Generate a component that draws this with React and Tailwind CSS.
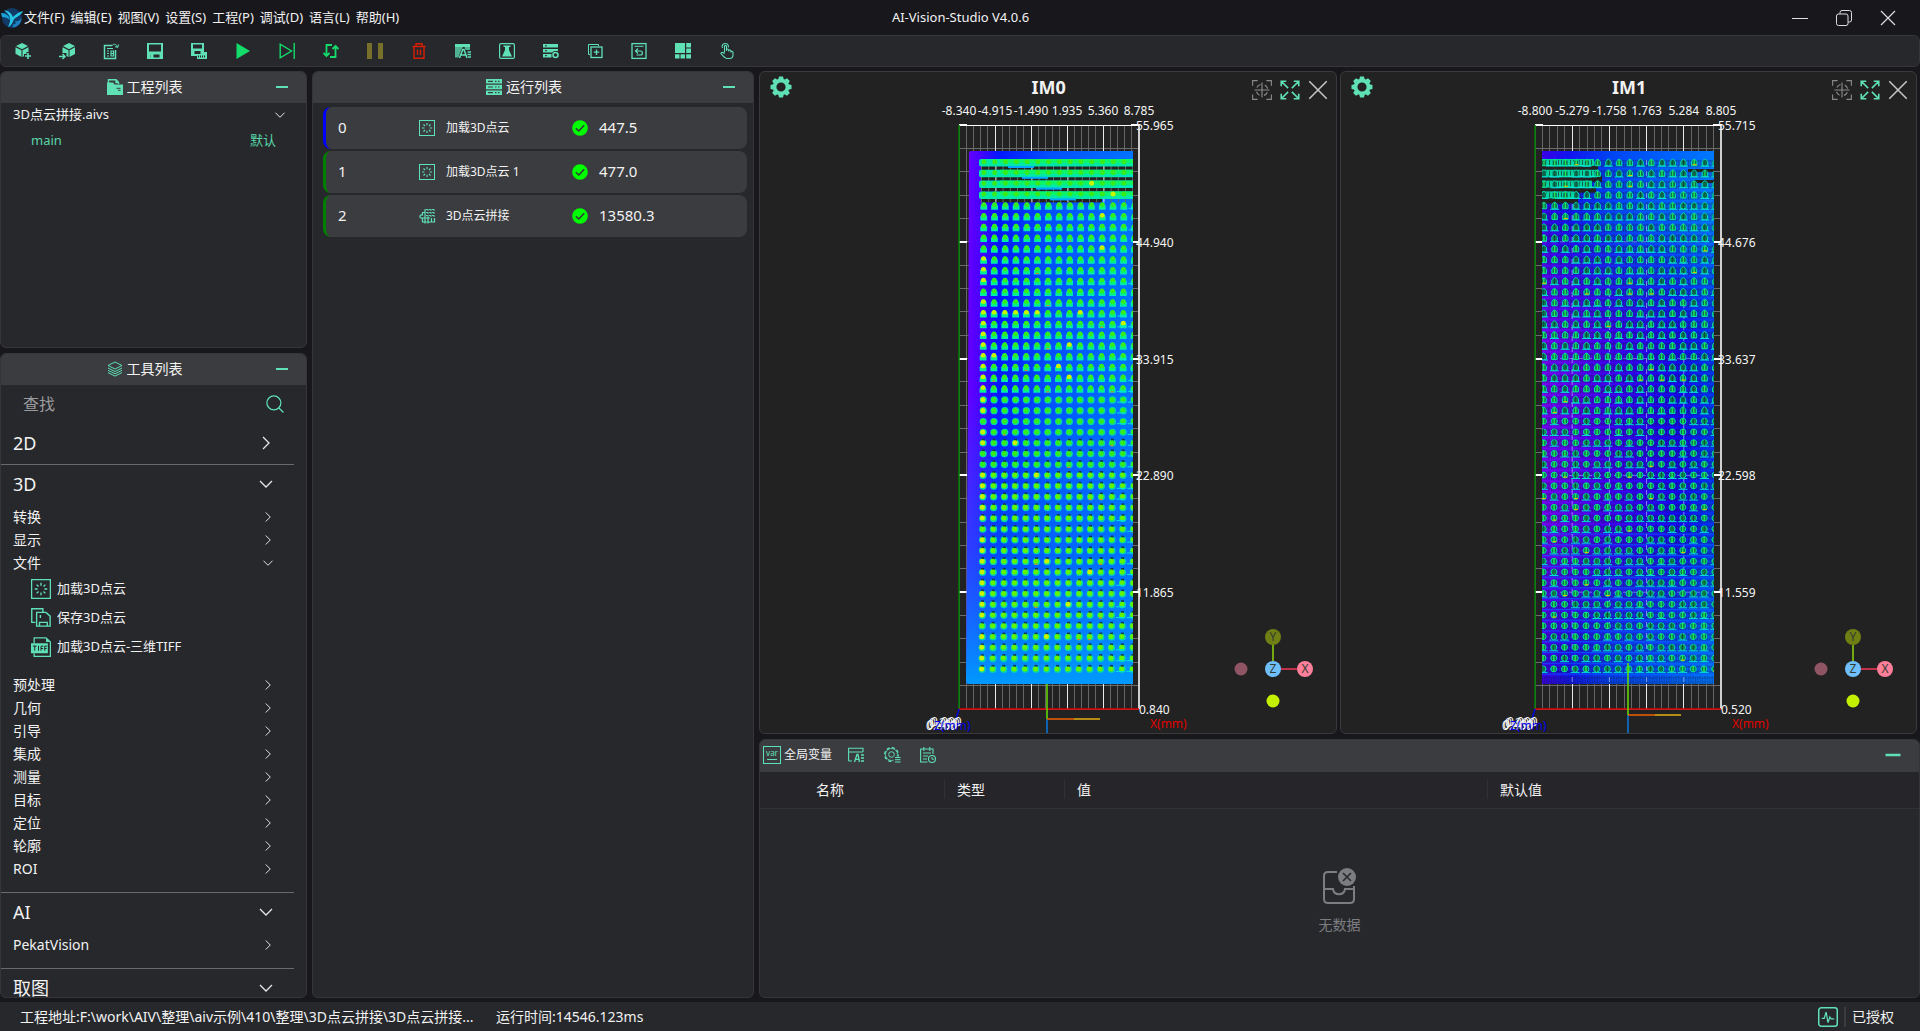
import { useState } from "react";

const menus = [
  "文件(F)",
  "编辑(E)",
  "视图(V)",
  "设置(S)",
  "工程(P)",
  "调试(D)",
  "语言(L)",
  "帮助(H)",
];

const runs = [
  { id: 0, name: "加载3D点云", time: "447.5", icon: "load", edge: "border-l-[#0000ff]" },
  { id: 1, name: "加载3D点云 1", time: "477.0", icon: "load", edge: "border-l-[#008000]" },
  { id: 2, name: "3D点云拼接", time: "13580.3", icon: "stitch", edge: "border-l-[#008000]" },
];

const views = [
  {
    name: "IM0",
    left: 51,
    step: 36,
    xTicks: ["-8.340", "-4.915", "-1.490", "1.935", "5.360", "8.785"],
    yTicks: ["55.965", "44.940", "33.915", "22.890", "11.865", "0.840"],
    originX: 139,
    originY: 616,
    sparse: false,
  },
  {
    name: "IM1",
    left: 47,
    step: 37.2,
    xTicks: ["-8.800", "-5.279", "-1.758", "1.763", "5.284", "8.805"],
    yTicks: ["55.715", "44.676", "33.637", "22.598", "11.559", "0.520"],
    originX: 140,
    originY: 612,
    sparse: true,
  },
];

// 16x16 icons, all drawn with currentColor
const glyphs = {
  cubeAdd: (
    <>
      <path d="M7 0 13 3 7 6.200 1 3Z" fill="currentColor" />
      <path d="M.5 4.200 6.500 7.300V14L.5 10.800Z" fill="currentColor" />
      <path d="M7.500 7.300 13.500 4.200V9H11.500V11H9V13.200L7.500 14Z" fill="currentColor" />
      <path d="M13 10V16M10 13H16" stroke="currentColor" strokeWidth="1.600" />
    </>
  ),
  cubeIn: (
    <>
      <path d="M10 0 16 3 10 6.200 4 3Z" fill="currentColor" />
      <path d="M3.500 4.200 9.500 7.300V14L7.500 13V10H3.500Z" fill="currentColor" />
      <path d="M10.500 7.300 16 4.200V11L10.500 14Z" fill="currentColor" />
      <path d="M0 13.500H6M3.500 11 6 13.500 3.500 16" stroke="currentColor" strokeWidth="1.500" fill="none" />
    </>
  ),
  docOut: (
    <>
      <path d="M9 2.500H1.500V15.500H12.500V7" stroke="currentColor" strokeWidth="1.500" fill="none" />
      <path d="M4 5.500H10M4 8H6M4 10.500H6M4 13H6M8 8H10.500V13H8ZM8 10.500H10.500" stroke="currentColor" strokeWidth="1.200" fill="none" />
      <path d="M9 3C10 .5 13 .5 14.500 4M12 3.500 14.700 4.500 15.500 1.500" stroke="currentColor" fill="none" />
    </>
  ),
  save: (
    <>
      <path d="M0 0H16V16H0Z" fill="currentColor" />
      <path d="M2 1.500H14V8.500H2ZM3.500 11.500H12.500V14.500H3.500Z" fill="#27282c" />
      <path d="M3.500 11H6.500V15H3.500Z" fill="currentColor" />
    </>
  ),
  saveAs: (
    <>
      <path d="M0 0H13V9H16V16H6V13H0Z" fill="currentColor" />
      <path d="M2 1.500H11V5.500H2ZM3.500 8H9.500V11H3.500Z" fill="#27282c" />
      <path d="M7.500 12.500V14.500M9.500 12.500V14.500M11.500 12.500V14.500M13.500 12.500V14.500" stroke="#27282c" />
    </>
  ),
  play: <path d="M1.500 0 15 8 1.500 16Z" fill="currentColor" />,
  step: <path d="M1.200 1.200V14.800L12.500 8ZM15.200 0V16" stroke="currentColor" strokeWidth="1.400" fill="none" />,
  loop: (
    <path
      d="M9 2H3.500V13M.5 10 3.500 13 6.500 10M7 14H12.500V3M9.500 6 12.500 3 15.500 6M6 2H9M7 14H10"
      stroke="currentColor"
      strokeWidth="1.800"
      fill="none"
    />
  ),
  pause: <path d="M0 0H5V16H0ZM11 0H16V16H11Z" fill="currentColor" />,
  trash: (
    <path
      d="M1.500 3.500H14.500M5 3V.8H11V3M3 4V15.200H13V4M6.500 6.500V12M9.500 6.500V12"
      stroke="currentColor"
      strokeWidth="1.400"
      fill="none"
    />
  ),
  windowA: (
    <>
      <path d="M0 1H15V4H0Z" fill="currentColor" />
      <path d="M0 4H8L5.500 8.500 3.500 14.500H0ZM9.500 4H15V7H10.500Z" fill="currentColor" fillOpacity=".75" />
      <path d="M4.500 15 7.800 6.500H9L12 15M5.500 12H10.500M12.500 9H16M12.500 11.500H16M13 14H16" stroke="currentColor" strokeWidth="1.500" fill="none" />
    </>
  ),
  flask: (
    <>
      <rect x=".6" y=".6" width="14.800" height="14.800" rx="1.500" stroke="currentColor" strokeWidth="1.200" fill="none" />
      <path d="M4.500 2.500H11.500V4H10V7L13 13.500H3L6 7V4H4.500Z" fill="currentColor" />
    </>
  ),
  serverGear: (
    <>
      <path d="M0 1H15V4.500H0ZM0 6H15V8H11L9 9.500H0ZM0 11H8.500V14.500H0Z" fill="currentColor" />
      <path d="M2 2.800H4M2 7.700H4M2 12.700H4" stroke="#27282c" />
      <circle cx="12.500" cy="12" r="2.500" stroke="currentColor" strokeWidth="1.600" fill="none" />
    </>
  ),
  copyAdd: (
    <>
      <path d="M3 11.500H1.500V1.500H11.500V3" stroke="currentColor" fill="none" />
      <rect x="4" y="4" width="11" height="10.500" stroke="currentColor" strokeWidth="1.300" fill="none" />
      <path d="M9.500 6.500V12M6.800 9.200H12.200" stroke="currentColor" strokeWidth="1.300" />
    </>
  ),
  undo: (
    <>
      <rect x="1" y=".6" width="14" height="14.800" stroke="currentColor" strokeWidth="1.300" fill="none" />
      <path d="M3.500 3.300H12.500" stroke="currentColor" />
      <path d="M7 5.500 4.500 8 7 10.500M5 8H9.500C12 8 12 12 9.500 12H5.500" stroke="currentColor" strokeWidth="1.200" fill="none" />
    </>
  ),
  layout: (
    <path
      d="M0 0H10V10H0ZM11.200 0H16V4.500H11.200ZM11.200 5.500H16V10H11.200ZM0 11.200H4.500V15.500H0ZM5.500 11.200H10V15.500H5.500ZM11.200 11.200H16V15.500H11.200Z"
      fill="currentColor"
    />
  ),
  tap: (
    <path
      d="M5.500 9.500V3.500C5.500 2 7.500 2 7.500 3.500V8M7.500 7C7.500 5.600 9.700 5.600 9.700 7V8.500C9.700 6.500 11.900 6.500 11.900 8V9.500C11.900 7.800 14 7.800 14 9.500V12C14 14.500 12.500 15.500 10.500 15.500H8C6 15.500 5 14 1.800 10.500 2.500 8.800 4 9 5.500 10.800M3.500 5C2 1.500 5 .3 6.500 .5 8.500 .5 10 2.500 9.200 4.500"
      stroke="currentColor"
      strokeWidth="1.100"
      fill="none"
    />
  ),
  folder: (
    <>
      <path d="M1.500 4V.8H9L11.500 3.200V5M9 .8V3.500H11.500" stroke="currentColor" strokeWidth="1.400" fill="none" />
      <path d="M0 3.500H6L7.500 5.500H16V16H0Z" fill="currentColor" />
      <path d="M9.500 9.300H13.500M11 11.300H13.500" stroke="#3b3c3f" />
    </>
  ),
  servers: (
    <>
      <path d="M0 0H16V4.600H0ZM0 5.700H16V10.300H0ZM0 11.400H16V16H0Z" fill="currentColor" />
      <path d="M2 2.300H7M2 8H7M2 13.700H7M9 2.300H10.500M12 2.300H13.500M9 8H10.500M12 8H13.500M9 13.700H10.500M12 13.700H13.500" stroke="#3b3c3f" strokeWidth="1.200" />
    </>
  ),
  layers: (
    <path
      d="M8 1 15 4.500 8 8 1 4.500ZM1 7 8 10.500 15 7M1 9.300 8 12.800 15 9.300M1 11.600 8 15.100 15 11.600"
      stroke="currentColor"
      fill="none"
    />
  ),
  load: (
    <>
      <rect x=".5" y=".5" width="15" height="15" stroke="currentColor" fill="none" />
      <path
        d="M8 3V5.300M8 10.700V13M3 8H5.300M10.700 8H13M4.500 4.500 6 6M10 10 11.500 11.500M4.500 11.500 6 10M10 6 11.500 4.500"
        stroke="currentColor"
        strokeWidth="1.100"
      />
    </>
  ),
  stitch: (
    <>
      <path d="M6 1V4.500H3.500V7C0 6 0 11 3.500 10V14H15.500V10M6 4.500V15.500M9 9V15.500M12.500 10V14M3.500 10H11" stroke="currentColor" strokeWidth="1.200" fill="none" />
      <path d="M9 1V9M12 1V9M15 1V9M7 1.500H16M7 4.500H16M7 7.500H16" stroke="currentColor" strokeWidth=".9" strokeDasharray="2 1" />
    </>
  ),
  saveCloud: (
    <>
      <path d="M3.500 11.500H.6V.6H9.500V3.500" stroke="currentColor" strokeWidth="1.100" fill="none" />
      <path d="M4.500 3.500H12L15.300 6.500V14.500H4.500ZM6.800 14.500V11.500H13V14.500M7.500 5.500V8" stroke="currentColor" strokeWidth="1.100" fill="none" />
    </>
  ),
  tiff: (
    <>
      <path d="M2.500 5V.6H12L15.500 4V15.400H2.500V13" stroke="currentColor" fill="none" />
      <path d="M0 5H13.500V13H0ZM12 .5 15.500 4H12Z" fill="currentColor" />
      <path d="M1.500 7.300H4.500M3 7V11M6 7V11M8 11V7.300H10M8 9.200H9.700M11 11V7.300H13M11 9.200H12.500" stroke="#27282c" strokeWidth=".8" fill="none" />
    </>
  ),
  tableA: (
    <>
      <path d="M.6 14V1.200H15V5M.6 5H15M.6 14H4" stroke="currentColor" strokeWidth="1.100" fill="none" />
      <path d="M6.500 15 9 7.500H10L11.500 15M7.500 12.300H11M13 8H16M13 11H16M13 14H16" stroke="currentColor" strokeWidth="1.300" fill="none" />
    </>
  ),
  gearList: (
    <>
      <circle cx="7.500" cy="7.500" r="6.800" stroke="currentColor" strokeWidth="1.400" strokeDasharray="3.200 2.140" fill="none" />
      <circle cx="7.500" cy="7.500" r="6" stroke="currentColor" strokeWidth=".8" fill="none" />
      <circle cx="7.500" cy="7.500" r="2.800" stroke="currentColor" fill="none" />
      <path d="M9.500 9.500H17V17H9.500Z" fill="#3b3c3f" />
      <path d="M11 10.500H16.500M11 12.700H16.500M11 15H16.500" stroke="currentColor" />
    </>
  ),
  calendar: (
    <>
      <path d="M7.500 15H.6V2H13V7M3.800 0V4M9.800 0V4M3 6H11M3 9H8M3 12H7" stroke="currentColor" strokeWidth="1.100" fill="none" />
      <circle cx="12" cy="12" r="3.500" stroke="currentColor" strokeWidth="1.100" fill="none" />
      <path d="M12 10V12.200H14" stroke="currentColor" fill="none" />
    </>
  ),
  focus: (
    <>
      <path d="M.5 4.500V.5H4.500M11.500 .5H15.500V4.500M15.500 11.500V15.500H11.500M4.500 15.500H.5V11.500" stroke="currentColor" strokeWidth=".9" fill="none" />
      <path d="M8 2V14M2 8H14" stroke="currentColor" strokeWidth=".9" />
      <circle cx="8" cy="8" r="4.600" stroke="currentColor" strokeWidth=".9" strokeDasharray="3.600 3.620" strokeDashoffset="-1.800" fill="none" />
    </>
  ),
  expand: (
    <path
      d="M1 5V1H5M1 1 6.500 6.500M11 1H15V5M15 1 9.500 6.500M1 11V15H5M1 15 6.500 9.500M15 11V15H11M15 15 9.500 9.500"
      stroke="currentColor"
      strokeWidth="1.300"
      fill="none"
    />
  ),
  close: <path d="M1 1 15 15M15 1 1 15" stroke="currentColor" strokeWidth="1.200" />,
  search: (
    <>
      <circle cx="7" cy="7" r="6.200" stroke="currentColor" strokeWidth="1.100" fill="none" />
      <path d="M11.500 11.500 15.500 15.500" stroke="currentColor" strokeWidth="1.100" />
    </>
  ),
  minus: <path d="M2 8H14" stroke="currentColor" strokeWidth="2" />,
  right: <path d="M5 2 11 8 5 14" stroke="currentColor" strokeWidth="1.300" fill="none" />,
  down: <path d="M2 5 8 11 14 5" stroke="currentColor" strokeWidth="1.300" fill="none" />,
  pulse: (
    <>
      <rect x=".6" y=".6" width="14.800" height="14.800" rx="2" stroke="currentColor" strokeWidth="1.200" fill="none" />
      <path d="M3 9H5L6.500 4 8 12.500 9.500 8 10.500 9.500H13" stroke="currentColor" fill="none" />
    </>
  ),
};

const Icon = ({ name, className = "size-4" }) => (
  <svg viewBox="0 0 16 16" className={`shrink-0 overflow-visible ${className}`} aria-hidden="true">
    {glyphs[name]}
  </svg>
);

const tools = [
  ["cubeAdd", "text-[#5fe0b5]"],
  ["cubeIn", "text-[#5fe0b5]"],
  ["docOut", "text-[#5fe0b5]"],
  ["save", "text-[#5fe0b5]"],
  ["saveAs", "text-[#5fe0b5]"],
  ["play", "text-[#13dc6b]"],
  ["step", "text-[#13dc6b]"],
  ["loop", "text-[#13dc6b]"],
  ["pause", "text-[#77702a]"],
  ["trash", "text-[#d81e06]"],
  ["windowA", "text-[#5fe0b5]"],
  ["flask", "text-[#5fe0b5]"],
  ["serverGear", "text-[#5fe0b5]"],
  ["copyAdd", "text-[#5fe0b5]"],
  ["undo", "text-[#5fe0b5]"],
  ["layout", "text-[#5fe0b5]"],
  ["tap", "text-[#5fe0b5]"],
];

const Logo = () => (
  <svg viewBox="0 0 22 22" className="size-[22px] shrink-0" aria-hidden="true">
    <circle cx="11" cy="11" r="10" fill="#123a66" />
    <path d="M0 6C4 6 8 8 9 13 7 11 4 10 1 10Z" fill="#1aa3d6" />
    <path d="M3 3C8 4 10 6 12 10 15 7 18 5 22 4 20 9 14 10 12.500 13 11.500 16 10 19 7 20 9 16 9.500 13 9 11 8 7 5 5 3 3Z" fill="#26c6e6" />
    <path d="M14 14C17 15 19 13 20.500 11 20.500 16 17 20 12 20.500 11 18.500 12 17 15 16.500Z" fill="#1b7fc0" />
  </svg>
);

const PanelHeader = ({ icon, title }) => (
  <header className="relative flex h-[31px] shrink-0 items-center justify-center gap-1 bg-[#3b3c3f] pr-[18px] pb-0.5 text-sm">
    <span className="text-[#5fe0b5]">
      <Icon name={icon} />
    </span>
    <h2>{title}</h2>
    <button aria-label="minimize" className="absolute right-4 text-[#5fe0b5]">
      <Icon name="minus" />
    </button>
  </header>
);

const GroupRow = ({ label, open }) => (
  <button className="flex h-[23px] w-full items-center justify-between pr-8 pl-3 text-sm">
    {label}
    <Icon name={open ? "down" : "right"} className="size-3 text-gray-200" />
  </button>
);

const Category = ({ label, open, children }) => (
  <section className="mr-3 shrink-0 border-b border-[#6a6a6a]">
    <button className="flex h-10 w-full items-center justify-between pr-5 pb-0.5 pl-3 text-lg">
      {label}
      <Icon name={open ? "down" : "right"} className="size-4 text-gray-200" />
    </button>
    {children && <div className="-mr-3 pb-3">{children}</div>}
  </section>
);

const ToolItem = ({ icon, label }) => (
  <li>
    <button className="flex h-[29px] items-center gap-1.5 pl-[30px] text-[13px]">
      <Icon name={icon} className="size-5 text-[#5fe0b5]" />
      {label}
    </button>
  </li>
);

// cheap repeatable noise in 0..1
const noise = (a, b) => {
  const v = Math.sin(a * 12.9898 + b * 78.233) * 43758.5453;
  return v - Math.floor(v);
};

const range = (n) => Array.from({ length: n }, (_, i) => i);

const TOP = 22;
const BOTTOM = 606;

const GridLines = ({ left, step }) => (
  <g shapeRendering="crispEdges">
    {range(25).map((i) => (
      <path key={i} d={`M${left + (i * step) / 5} ${TOP}V${BOTTOM}`} stroke="#666" />
    ))}
    {range(26).map((i) => (
      <path key={i} d={`M${left} ${TOP + i * 23.36}H${left + step * 5}`} stroke="#6b6b6b" />
    ))}
    {range(5).map((i) => (
      <path key={i} d={`M${left + (i + 1) * step} ${TOP}V${BOTTOM}`} stroke="#e8e8e8" />
    ))}
    <path d={`M${left + step * 5} ${TOP}V${BOTTOM}`} stroke="#d0d0d0" strokeWidth="2" />
    {range(5).map((i) => (
      <path
        key={i}
        d={`M${left} ${TOP + i * 116.8}h8M${left + step * 5 - 8} ${TOP + i * 116.8}h8`}
        stroke="#fff"
        strokeWidth="2"
      />
    ))}
    <path d={`M${left} ${TOP}H${left + step * 5}`} stroke="#fff" />
  </g>
);

const DenseCloud = () => (
  <g clipPath="url(#denseClip)">
    <defs>
      <clipPath id="denseClip">
        <path d="M63 48H225V581H60Q58 581 58 578L60 300 61 50Q61 48 63 48Z" />
      </clipPath>
      <linearGradient id="denseX">
        <stop offset="0" stopColor="#6a00ff" />
        <stop offset=".08" stopColor="#4a00ff" />
        <stop offset=".2" stopColor="#0018ff" />
        <stop offset=".5" stopColor="#0050ff" />
        <stop offset="1" stopColor="#0074ff" />
      </linearGradient>
      <linearGradient id="denseY" x2="0" y2="1">
        <stop offset=".45" stopColor="#0080ff" stopOpacity="0" />
        <stop offset=".75" stopColor="#0070ff" stopOpacity=".55" />
        <stop offset="1" stopColor="#009aff" />
      </linearGradient>
    </defs>
    <rect x="58" y="48" width="168" height="534" fill="url(#denseX)" />
    <rect x="58" y="48" width="168" height="534" fill="url(#denseY)" />
    {range(4).map((r) => {
      const y = 56 + r * 10.8;
      return (
        <g key={r}>
          <rect x="74" y={y + 7} width={r === 3 ? 120 : 152} height="4" fill="#222" />
          {range(22).map((i) => (
            <rect key={i} x={73 + i * 7.2} y={y + 7} width="1" height="4" fill={i % 5 === 2 ? "#eee" : "#666"} />
          ))}
          <rect x="71" y={y} width="155" height="7.500" rx="2" fill="#00e8a8" />
          <rect x="92" y={y} width="134" height="4" fill="#0cf468" />
          <rect x={100 + r * 14} y={y + 7} width="26" height="2" fill="#00a8ff" />
        </g>
      );
    })}
    {range(48).map((r) =>
      range(15).map((c) => {
        const t = r / 47;
        const x = 76 - t * 2.3 + c * 10.77;
        const y = 59.7 + r * 10.77;
        const n = noise(r, c);
        const bright = (c === 0 && r > 8 && n > 0.25) || n > 0.98 || (r === 14 && c < 6);
        const green = t > 0.6 ? "#62f400" : "#35ec1c";
        return (
          <g key={`${r}-${c}`}>
            {r > 3 && t < 0.45 && (
              <path d={`M${x - 3.4} ${y + 4}V${y}Q${x} ${y - 7} ${x + 3.4} ${y}V${y + 4}Z`} fill="#00e4c0" />
            )}
            {t >= 0.45 && <circle cx={x + 0.4} cy={y + 0.3} r="3.600" fill="#00d8a8" />}
            {t > 0.55 && <rect x={x - 1} y={y - 4} width="3" height="2" fill="#0c3a55" />}
            <circle cx={x} cy={y - (t < 0.45 ? 1 : 0)} r="2.500" fill={bright ? "#c8f400" : green} />
            {r > 3 && t < 0.45 && <rect x={x - 2.5} y={y + 1} width="5" height="2" fill="#00f47c" />}
            {n > 0.86 && t < 0.95 && n < 0.9 && <rect x={x - 1.5} y={y + 2.5} width="3" height="1" fill="#e87820" />}
            {c > 12 && n > 0.5 && <rect x={x - 6} y={y + 2} width="9" height="1" fill="#00e0e0" />}
          </g>
        );
      })
    )}
  </g>
);

const SparseCloud = () => (
  <g clipPath="url(#sparseClip)">
    <defs>
      <clipPath id="sparseClip">
        <rect x="54" y="48" width="172" height="533" />
      </clipPath>
      <linearGradient id="sparseX">
        <stop offset="0" stopColor="#3a00e8" />
        <stop offset=".15" stopColor="#1212f0" />
        <stop offset=".4" stopColor="#0044f4" />
        <stop offset="1" stopColor="#0078ff" />
      </linearGradient>
      <linearGradient id="purpleX">
        <stop offset="0" stopColor="#7400f0" />
        <stop offset=".35" stopColor="#4200ee" />
        <stop offset=".8" stopColor="#1408f0" />
        <stop offset="1" stopColor="#0038f0" />
      </linearGradient>
      <linearGradient id="fadeY" x2="0" y2="1">
        <stop offset=".12" stopColor="#fff" stopOpacity="0" />
        <stop offset=".35" stopColor="#fff" />
        <stop offset=".7" stopColor="#fff" />
        <stop offset="1" stopColor="#fff" stopOpacity="0" />
      </linearGradient>
      <mask id="purpleMask">
        <rect x="54" y="48" width="172" height="533" fill="url(#fadeY)" />
      </mask>
      <pattern id="weave" width="7.200" height="10.770" patternUnits="userSpaceOnUse">
        <path d="M1 2V11M3.500 2V11M6 3V11" stroke="#101828" strokeWidth="1" strokeOpacity=".4" />
        <path d="M0 4H7.200M0 8.500H7.200" stroke="#101828" strokeWidth="1" strokeOpacity=".25" />
      </pattern>
    </defs>
    <rect x="54" y="48" width="172" height="533" fill="url(#sparseX)" />
    <rect x="54" y="48" width="172" height="533" fill="url(#purpleX)" mask="url(#purpleMask)" />
    <rect x="54" y="57" width="172" height="524" fill="url(#weave)" />
    {range(14).map((i) => (
      <path key={i} d={`M54 ${431 + i * 10.77}H226`} stroke="#0068ff" strokeOpacity=".7" />
    ))}
    <path d="M84.200 90V581M121.400 57V581M158.600 57V581M195.800 57V581" stroke="#c8d8ff" strokeOpacity=".6" strokeDasharray="5 6" />
    <path d="M54 138.800H226M54 255.600H226M54 372.400H226M54 489.200H226" stroke="#b8c8ff" strokeOpacity=".5" strokeDasharray="5 4" />
    {range(4).map((r) => {
      const w = [52, 56, 50, 32][r];
      const y = 56 + r * 10.8;
      return (
        <g key={r}>
          <rect x="54" y={y + 6} width={w + 4} height="6" fill="#222" />
          <rect x="54" y={y} width={w} height="7" fill="#00d29c" />
          {range(Math.floor(w / 3)).map((i) => (
            <rect key={i} x={55 + i * 3} y={y + 1} width="1" height="5" fill="#1a6050" />
          ))}
          <rect x={58 + r * 3} y={y + 6} width={w - 8} height="1.500" fill="#00f0d0" />
        </g>
      );
    })}
    <rect x="200" y="66" width="26" height="3" fill="#222" />
    <rect x="206" y="77" width="20" height="3" fill="#222" />
    {range(48).map((r) =>
      range(17).map((c) => {
        const t = r / 47;
        const x = 56 - t + c * 10.73;
        const y = 59.7 + r * 10.77;
        const n = noise(r + 3, c + 9);
        return (
          <g key={`${r}-${c}`}>
            {t < 0.5 ? (
              <path
                d={`M${x - 2.7} ${y + 3}V${y - 1}Q${x} ${y - 6} ${x + 2.7} ${y - 1}V${y + 3}Z`}
                fill={n > 0.6 ? "#10a860" : "#108a5c"}
                stroke="#00dcb4"
                strokeWidth="1"
              />
            ) : (
              <circle cx={x} cy={y} r="3" fill="#14b450" stroke="#00d4b0" strokeWidth="1" />
            )}
            <rect x={x - 1.8} y={y - 2} width="1" height="4" fill="#0a6a50" />
            <rect x={x - 0.5} y={y - 3} width="1" height="6" fill={n > 0.4 ? "#20f050" : "#0a4838"} />
            <rect x={x + 1} y={y - 2} width="1" height="4" fill="#0a6a50" />
            {n < 0.5 && <rect x={x - 4.5} y={y + 3} width="9" height="1" fill="#00dcdc" />}
            {n > 0.95 && <rect x={x - 1.5} y={y + 1.5} width="4" height="1" fill="#e8c000" />}
          </g>
        );
      })
    )}
  </g>
);

const Plot = ({ view }) => {
  const { left, step, originX, originY } = view;
  const right = left + step * 5;

  return (
    <svg viewBox="0 0 280 630" className="h-[630px] w-[280px] shrink-0 overflow-visible text-xs" fill="#f5f5f5">
      <GridLines left={left} step={step} />
      {view.sparse ? <SparseCloud /> : <DenseCloud />}
      {view.xTicks.map((tick, i) => (
        <text key={tick} x={left + i * step} y="12" textAnchor="middle">
          {tick}
        </text>
      ))}
      {view.yTicks.map((tick, i) => (
        <text key={tick} x={right - (i === 5 ? 0 : 3)} y={27 + i * 116.8}>
          {tick}
        </text>
      ))}
      <g fill="none">
        <path d={`M${left} ${TOP}V${BOTTOM}`} stroke="#007c00" strokeWidth="1.500" />
        <path d={`M${left} ${BOTTOM}H${right}`} stroke="#e00000" strokeWidth="1.500" />
        <path d={`M${left} ${BOTTOM}L${left - 4} 620`} stroke="#0000e0" strokeWidth="1.500" />
        <path d={`M${originX} ${view.sparse ? 560 : 581}V${originY}`} stroke="#66e000" strokeWidth="1.500" />
        <path d={`M${originX} ${originY}V630`} stroke="#0878e0" strokeWidth="1.500" />
        <path d={`M${originX} ${originY}H${originX + 27}`} stroke="#f06000" strokeWidth="1.500" />
        <path d={`M${originX + 27} ${originY}H${originX + 53}`} stroke="#e8b010" strokeWidth="1.500" />
      </g>
      <text x={left - 28} y="623">0.000</text>
      <text x={left - 30} y="624">0.200</text>
      <text x={left - 32} y="626">0.400</text>
      <text x={left - 33} y="627">0.600</text>
      <text x={left - 25} y="627" fill="#0000e8">
        Z(mm)
      </text>
      <text x={right + 11} y="625" fill="#e00000">
        X(mm)
      </text>
    </svg>
  );
};

const AxisGizmo = () => (
  <svg viewBox="0 0 84 84" className="absolute right-[21px] bottom-[22px] size-[84px] text-xs" textAnchor="middle" fill="#333a33">
    <path d="M42 34V18" stroke="#76a810" strokeWidth="2" />
    <path d="M42 42H66" stroke="#c03048" strokeWidth="2" />
    <circle cx="42" cy="10" r="8" fill="#6f7f14" />
    <circle cx="10" cy="42" r="6.500" fill="#905565" />
    <circle cx="42" cy="42" r="8" fill="#6fbfff" />
    <circle cx="74" cy="42" r="8" fill="#ff7f9a" />
    <circle cx="42" cy="74" r="6.500" fill="#c3f000" />
    <text x="42" y="14">Y</text>
    <text x="42" y="46">Z</text>
    <text x="74" y="46">X</text>
  </svg>
);

const GearIcon = () => (
  <svg viewBox="0 0 22 22" className="size-[22px] text-[#5fe0b5]" fill="currentColor" aria-hidden="true">
    {range(8).map((i) => (
      <path key={i} d="M8 4.500 9 .5H13L14 4.500Z" transform={`rotate(${i * 45} 11 11)`} />
    ))}
    <circle cx="11" cy="11" r="6.400" fill="none" stroke="currentColor" strokeWidth="3.600" />
  </svg>
);

const ViewPanel = ({ view }) => (
  <section className="relative flex min-w-0 flex-1 flex-col overflow-hidden rounded-md border border-[#3a3a3c] bg-[#222222]">
    <header className="flex h-[31px] shrink-0 items-center justify-between pr-2 pb-0.5 pl-2.5">
      <button aria-label="settings">
        <GearIcon />
      </button>
      <h2 className="pl-[54px] text-lg font-bold">{view.name}</h2>
      <div className="flex items-center gap-2 pt-1.5 text-[#c8c8c8]">
        <button aria-label="focus" className="text-[#8a8a8a]">
          <Icon name="focus" className="size-5" />
        </button>
        <button aria-label="expand" className="text-[#5fe0b5]">
          <Icon name="expand" className="size-5" />
        </button>
        <button aria-label="close">
          <Icon name="close" className="size-5" />
        </button>
      </div>
    </header>
    <div className="flex min-h-0 flex-1 justify-center">
      <Plot view={view} />
    </div>
    <AxisGizmo />
  </section>
);

const VariablePanel = () => (
  <section className="flex min-h-0 flex-1 flex-col overflow-hidden rounded-md border border-[#35363a] bg-[#27282c]">
    <header className="flex h-8 shrink-0 items-center bg-[#3b3c3f] pb-0.5 pl-[3px] text-xs">
      <span className="flex size-[18px] flex-col items-center border border-[#5fe0b5] text-[8px] leading-3 text-[#5fe0b5]">
        var
        <span className="h-px w-2.5 bg-[#5fe0b5]" />
      </span>
      <h2 className="pl-[3px]">全局变量</h2>
      <div className="flex gap-5 pl-4 text-[#5fe0b5]">
        <button aria-label="rename">
          <Icon name="tableA" />
        </button>
        <button aria-label="options">
          <Icon name="gearList" />
        </button>
        <button aria-label="schedule">
          <Icon name="calendar" />
        </button>
      </div>
      <button aria-label="minimize" className="ml-auto pr-4 text-[#5fe0b5]">
        <Icon name="minus" className="size-5" />
      </button>
    </header>
    <table className="w-full table-fixed text-left text-sm">
      <thead>
        <tr className="h-9 border-b border-[#303136] bg-[#26252a]">
          <th className="w-[184px] pl-14 font-normal">名称</th>
          <th className="w-[120px] font-normal">
            <span className="border-l border-[#303136] pl-3">类型</span>
          </th>
          <th className="w-[36.5%] font-normal">
            <span className="border-l border-[#303136] pl-3">值</span>
          </th>
          <th className="font-normal">
            <span className="border-l border-[#303136] pl-3">默认值</span>
          </th>
        </tr>
      </thead>
    </table>
    <div className="flex flex-1 flex-col items-center justify-center gap-2.5 pb-1 text-sm text-[#7c7d80]">
      <svg viewBox="0 0 36 38" className="h-[38px] w-9" fill="none" aria-hidden="true">
        <path d="M15 5H6Q2 5 2 9V32Q2 36 6 36H28Q32 36 32 32V19M2 22H11C12 29 22 29 23 22H32" stroke="#7c7d80" strokeWidth="2" />
        <circle cx="25" cy="10" r="9" fill="#7c7d80" />
        <path d="M21 6 29 14M29 6 21 14" stroke="#27282c" strokeWidth="1.600" />
      </svg>
      无数据
    </div>
  </section>
);

export default function App() {
  const [query, setQuery] = useState("");

  return (
    <div className="flex h-screen flex-col bg-[#18171c] font-['Noto_Sans','Noto_Sans_CJK_SC',sans-serif] text-[#f2f2f2]">
      <header className="flex h-[35px] shrink-0 items-center">
        <div className="flex flex-1 items-center pl-px">
          <Logo />
          <nav className="flex gap-1.5 pl-px text-[13px]">
            {menus.map((item) => (
              <button key={item} className="whitespace-nowrap">
                {item}
              </button>
            ))}
          </nav>
        </div>
        <h1 className="text-[13px]">AI-Vision-Studio V4.0.6</h1>
        <div className="flex flex-1 justify-end">
          <div className="flex items-center gap-7 pr-6">
            <button aria-label="minimize window">
              <svg viewBox="0 0 16 16" className="size-4">
                <path d="M0 8.500H16" stroke="#ddd" />
              </svg>
            </button>
            <button aria-label="restore window">
              <svg viewBox="0 0 16 16" className="size-4" fill="none" stroke="#ddd">
                <rect x=".5" y="4" width="11.500" height="11.500" rx="2" />
                <path d="M4 4V2.500Q4 .5 6 .5H13.500Q15.500 .5 15.500 2.500V10Q15.500 12 13.500 12H12" />
              </svg>
            </button>
            <button aria-label="close window">
              <Icon name="close" className="size-4 text-[#ddd]" />
            </button>
          </div>
        </div>
      </header>

      <div className="flex h-8 shrink-0 items-center gap-7 rounded-md border border-[#35363a] bg-[#27282c] px-3.5">
        {tools.map(([name, color]) => (
          <button key={name} aria-label={name} className={color}>
            <Icon name={name} />
          </button>
        ))}
      </div>

      <main className="flex min-h-0 flex-1 gap-[5px] py-1">
        <div className="flex w-[307px] shrink-0 flex-col gap-[5px]">
          <section className="h-[277px] shrink-0 overflow-hidden rounded-md border border-[#35363a] bg-[#27282c]">
            <PanelHeader icon="folder" title="工程列表" />
            <button className="flex h-6 w-full items-center justify-between pr-5 pl-3 text-[13px]">
              3D点云拼接.aivs
              <Icon name="down" className="size-3" />
            </button>
            <div className="flex h-7 items-center justify-between pr-[30px] pl-[30px] text-[13px] text-[#58d6a8]">
              <span>main</span>
              <span>默认</span>
            </div>
          </section>

          <section className="flex min-h-0 flex-1 flex-col overflow-hidden rounded-md border border-[#35363a] bg-[#27282c]">
            <PanelHeader icon="layers" title="工具列表" />
            <label className="flex h-[39px] shrink-0 items-center pr-[22px] pb-0.5 pl-[22px] text-[#5fe0b5]">
              <input
                value={query}
                onChange={(e) => setQuery(e.target.value)}
                placeholder="查找"
                aria-label="查找"
                className="min-w-0 flex-1 bg-transparent text-base text-white outline-none placeholder:text-[#9a9b9e]"
              />
              <Icon name="search" className="size-[18px]" />
            </label>
            <Category label="2D" />
            <Category label="3D" open>
              <GroupRow label="转换" />
              <GroupRow label="显示" />
              <GroupRow label="文件" open />
              <ul className="pb-3">
                <ToolItem icon="load" label="加载3D点云" />
                <ToolItem icon="saveCloud" label="保存3D点云" />
                <ToolItem icon="tiff" label="加载3D点云-三维TIFF" />
              </ul>
              {["预处理", "几何", "引导", "集成", "测量", "目标", "定位", "轮廓", "ROI"].map((label) => (
                <GroupRow key={label} label={label} />
              ))}
            </Category>
            <Category label="AI" open>
              <GroupRow label="PekatVision" />
            </Category>
            <Category label="取图" open />
          </section>
        </div>

        <section className="w-[442px] shrink-0 overflow-hidden rounded-md border border-[#35363a] bg-[#27282c]">
          <PanelHeader icon="servers" title="运行列表" />
          <ul className="flex flex-col gap-0.5 py-1 pr-1.5 pl-2.5">
            {runs.map((run) => (
              <li
                key={run.id}
                className={`flex h-[42px] items-center rounded-lg border-l-[3px] bg-[#3b3c3f] pl-3 ${run.edge}`}
              >
                <span className="w-[81px] pb-0.5 text-[15px]">{run.id}</span>
                <Icon name={run.icon} className="size-4 text-[#5fe0b5]" />
                <span className="w-[137px] pl-[11px] text-xs">{run.name}</span>
                <svg viewBox="0 0 16 16" className="size-4" aria-hidden="true">
                  <circle cx="8" cy="8" r="7.800" fill="#00ff00" />
                  <path d="M3.800 8.200 6.800 11 12.200 5.200" stroke="#33343a" strokeWidth="1.500" fill="none" />
                </svg>
                <span className="pb-0.5 pl-[11px] text-[15px]">{run.time}</span>
              </li>
            ))}
          </ul>
        </section>

        <div className="flex min-w-0 flex-1 flex-col gap-[5px]">
          <div className="flex shrink-0 gap-[3px] pr-[3px]">
            {views.map((view) => (
              <ViewPanel key={view.name} view={view} />
            ))}
          </div>
          <VariablePanel />
        </div>
      </main>

      <footer className="flex h-[29px] shrink-0 items-center bg-[#27282c] px-5 text-sm">
        <span className="w-[476px] truncate">工程地址:F:\work\AIV\整理\aiv示例\410\整理\3D点云拼接\3D点云拼接...</span>
        <span>运行时间:14546.123ms</span>
        <span className="ml-auto pr-1.5 text-[#5fe0b5]">
          <Icon name="pulse" className="size-5" />
        </span>
        <span className="border-l-2 border-[#3b3c3f] pr-1.5 pl-1.5">已授权</span>
      </footer>
    </div>
  );
}
